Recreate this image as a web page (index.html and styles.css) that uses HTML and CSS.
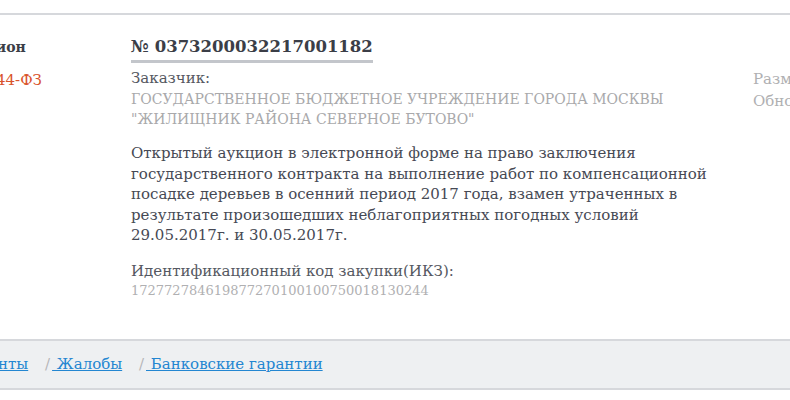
FILE: index.html
```html
<!DOCTYPE html>
<html lang="ru">
<head>
<meta charset="utf-8">
<link rel="stylesheet" href="styles.css">
</head>
<body>
<div class="card">
  <div class="row">
    <div class="left">
      <div class="type">Аукцион</div>
      <div class="law">44-ФЗ</div>
    </div>
    <div class="middle">
      <div class="num"><span class="num-text">№ 0373200032217001182</span></div>
      <div class="label">Заказчик:</div>
      <div class="customer">ГОСУДАРСТВЕННОЕ БЮДЖЕТНОЕ УЧРЕЖДЕНИЕ ГОРОДА МОСКВЫ<br>"ЖИЛИЩНИК РАЙОНА СЕВЕРНОЕ БУТОВО"</div>
      <div class="desc">Открытый аукцион в электронной форме на право заключения<br>государственного контракта на выполнение работ по компенсационной<br>посадке деревьев в осенний период 2017 года, взамен утраченных в<br>результате произошедших неблагоприятных погодных условий<br>29.05.2017г. и 30.05.2017г.</div>
      <div class="label ikz">Идентификационный код закупки(ИКЗ):</div>
      <div class="code">172772784619877270100100750018130244</div>
    </div>
    <div class="right">
      <div class="meta">Размещено</div>
      <div class="meta">Обновлено</div>
    </div>
  </div>
  <div class="bar">
    <a class="link first" href="#">Документы</a>
    <span class="sep">/</span><a class="link" href="#">&nbsp;Жалобы</a>
    <span class="sep">/</span><a class="link" href="#">&nbsp;Банковские гарантии</a>
  </div>
</div>
</body>
</html>
```
FILE: styles.css
```css
html, body {
  margin: 0;
  padding: 0;
  background: #ffffff;
  overflow: hidden;
}
body {
  font-family: "DejaVu Serif", "Liberation Serif", serif;
  font-size: 15px;
  color: #4a4d57;
  width: 790px;
  height: 400px;
}
.card {
  margin-top: 13px;
  border-top: 2px solid #d6d8dc;
}
.row {
  display: flex;
  padding-top: 21px;
  height: 324px;
  box-sizing: border-box;
}
.left {
  margin-left: -45px;
  width: 176px;
  flex: none;
}
.type {
  font-weight: bold;
  font-size: 14px;
  color: #3b3e47;
  line-height: 22px;
}
.law {
  color: #d9532c;
  font-size: 15px;
  line-height: 20px;
  margin-top: 12px;
  padding-left: 41px;
}
.middle {
  width: 622px;
  flex: none;
}
.num {
  line-height: 22px;
}
.num-text {
  display: inline-block;
  font-size: 16.5px;
  font-weight: bold;
  color: #3b3e47;
  border-bottom: 3px solid #c3c6cb;
  padding-bottom: 2px;
}
.label {
  color: #555861;
  line-height: 20px;
  margin-top: 5px;
}
.customer {
  color: #a9a9ab;
  font-size: 14px;
  line-height: 20px;
  margin-top: 1px;
}
.desc {
  line-height: 20.5px;
  margin-top: 14px;
  color: #464954;
}
.label.ikz {
  margin-top: 15px;
}
.code {
  color: #b0b0b2;
  font-size: 13px;
  line-height: 20px;
}
.right {
  padding-top: 32px;
}
.meta {
  color: #b0b0b2;
  line-height: 22px;
  white-space: nowrap;
}
.bar {
  background: #eef0f2;
  border-top: 2px solid #d6d8dc;
  border-bottom: 2px solid #d6d8dc;
  height: 47px;
  line-height: 47px;
  margin-left: -62px;
  margin-right: -10px;
  white-space: nowrap;
}
.link {
  color: #2386d1;
  text-decoration: underline;
}
.sep {
  color: #b5b5b8;
  margin-left: 12px;
  margin-right: 2px;
}
```
